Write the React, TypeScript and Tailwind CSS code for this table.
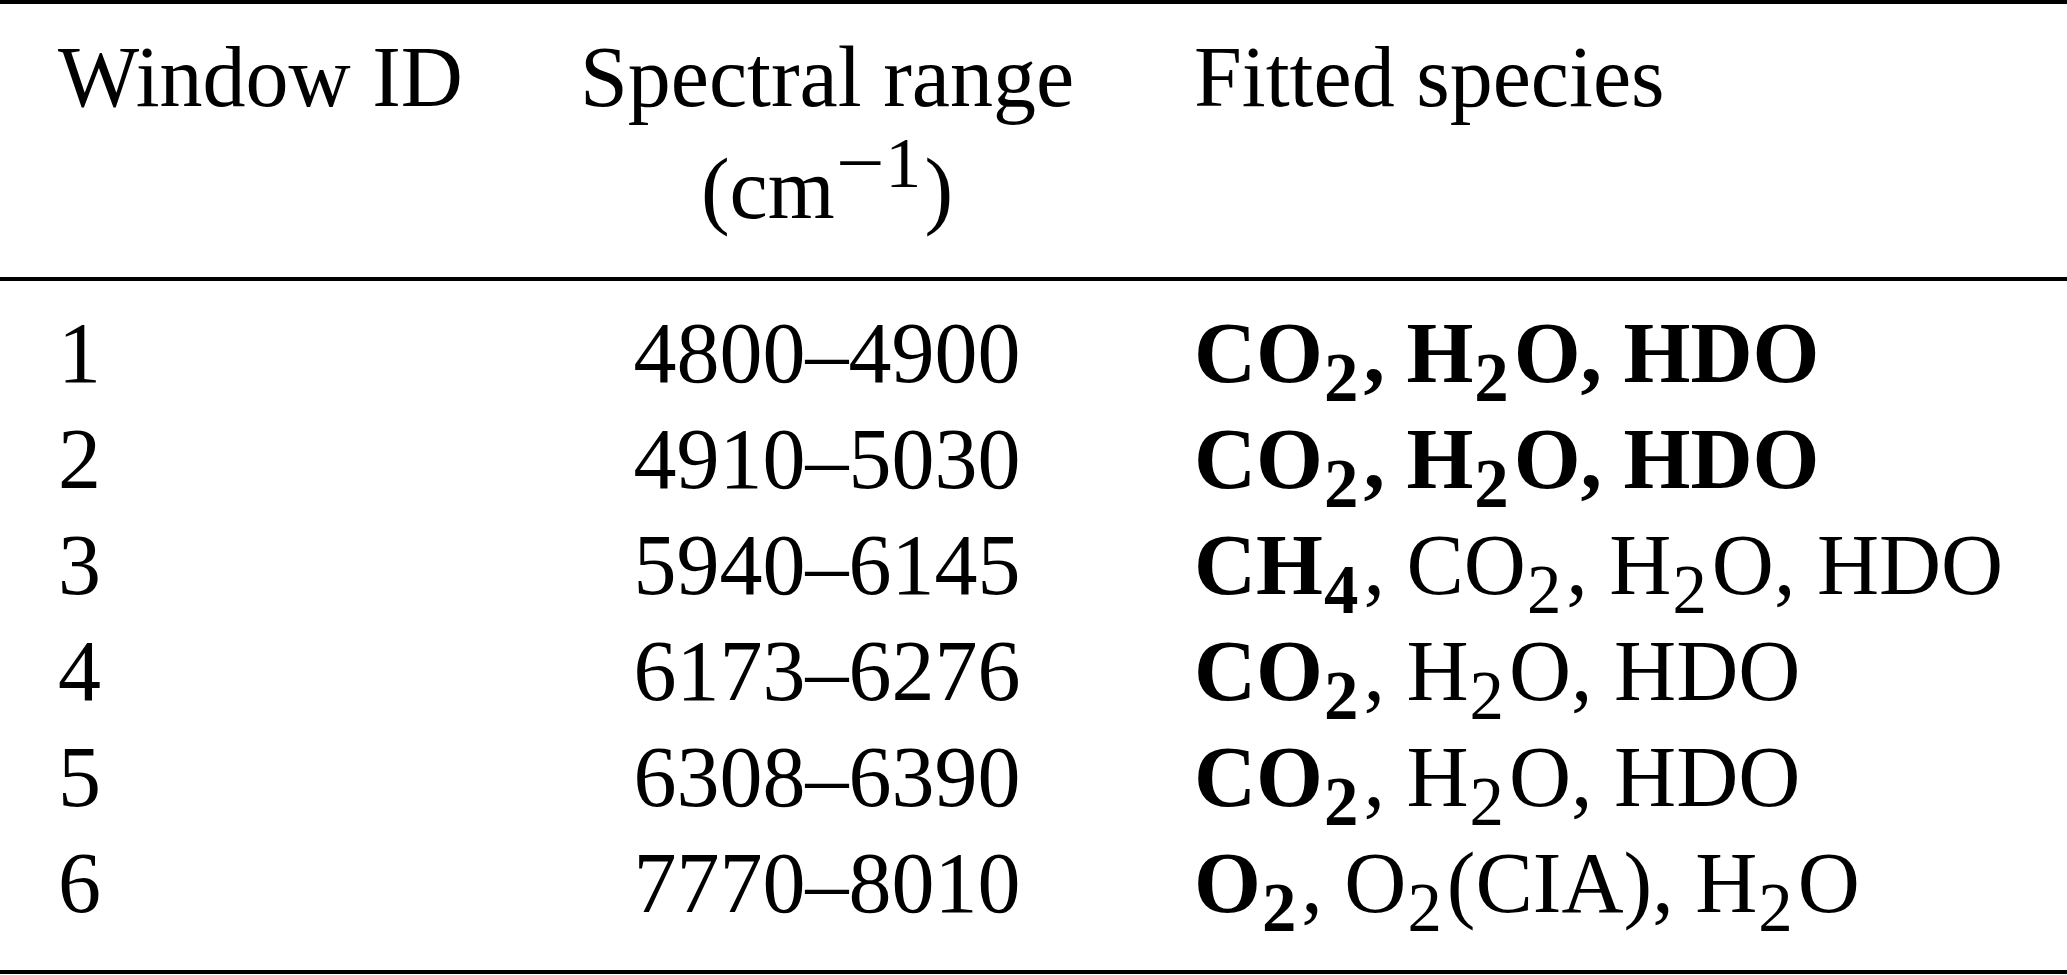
import React from "react";

function Sub({ children }: { children: React.ReactNode }) {
  return (
    <span className="relative top-[19px] text-[0.8em] leading-none pl-[1px] pr-[5px]">
      {children}
    </span>
  );
}

type Row = { id: string; range: string; species: React.ReactNode };

const rows: Row[] = [
  {
    id: "1",
    range: "4800–4900",
    species: (
      <span className="font-bold">
        CO<Sub>2</Sub>, H<Sub>2</Sub>O, HDO
      </span>
    ),
  },
  {
    id: "2",
    range: "4910–5030",
    species: (
      <span className="font-bold">
        CO<Sub>2</Sub>, H<Sub>2</Sub>O, HDO
      </span>
    ),
  },
  {
    id: "3",
    range: "5940–6145",
    species: (
      <>
        <span className="font-bold">
          CH<Sub>4</Sub>
        </span>
        , CO<Sub>2</Sub>, H<Sub>2</Sub>O, HDO
      </>
    ),
  },
  {
    id: "4",
    range: "6173–6276",
    species: (
      <>
        <span className="font-bold">
          CO<Sub>2</Sub>
        </span>
        , H<Sub>2</Sub>O, HDO
      </>
    ),
  },
  {
    id: "5",
    range: "6308–6390",
    species: (
      <>
        <span className="font-bold">
          CO<Sub>2</Sub>
        </span>
        , H<Sub>2</Sub>O, HDO
      </>
    ),
  },
  {
    id: "6",
    range: "7770–8010",
    species: (
      <>
        <span className="font-bold">
          O<Sub>2</Sub>
        </span>
        , O<Sub>2</Sub>(CIA), H<Sub>2</Sub>O
      </>
    ),
  },
];

export default function App() {
  return (
    <div className="w-[2067px] h-[975px] bg-white text-black font-['Liberation_Serif','Times_New_Roman',serif] text-[86px] overflow-hidden">
      <div className="h-[4px] bg-black" />
      <div className="grid grid-cols-[520px_614px_1fr] pt-[17px] pb-[32px] leading-[112px] whitespace-nowrap">
        <div className="pl-[58px]">Window ID</div>
        <div className="text-center">
          <div>Spectral range</div>
          <div>
            (cm
            <span className="relative top-[-31px] text-[0.84em] leading-none pr-[3px]">
              <span className="inline-block scale-x-[1.2] mx-[5px]">−</span>1
            </span>
            )
          </div>
        </div>
        <div className="pl-[60px]">Fitted species</div>
      </div>
      <div className="h-[4px] bg-black" />
      <div className="grid grid-cols-[520px_614px_1fr] pt-[19px] pb-[34px] leading-[106px] whitespace-nowrap">
        {rows.map((r) => (
          <React.Fragment key={r.id}>
            <div className="pl-[58px]">{r.id}</div>
            <div className="text-center">{r.range}</div>
            <div className="pl-[60px]">{r.species}</div>
          </React.Fragment>
        ))}
      </div>
      <div className="h-[4px] bg-black" />
    </div>
  );
}
